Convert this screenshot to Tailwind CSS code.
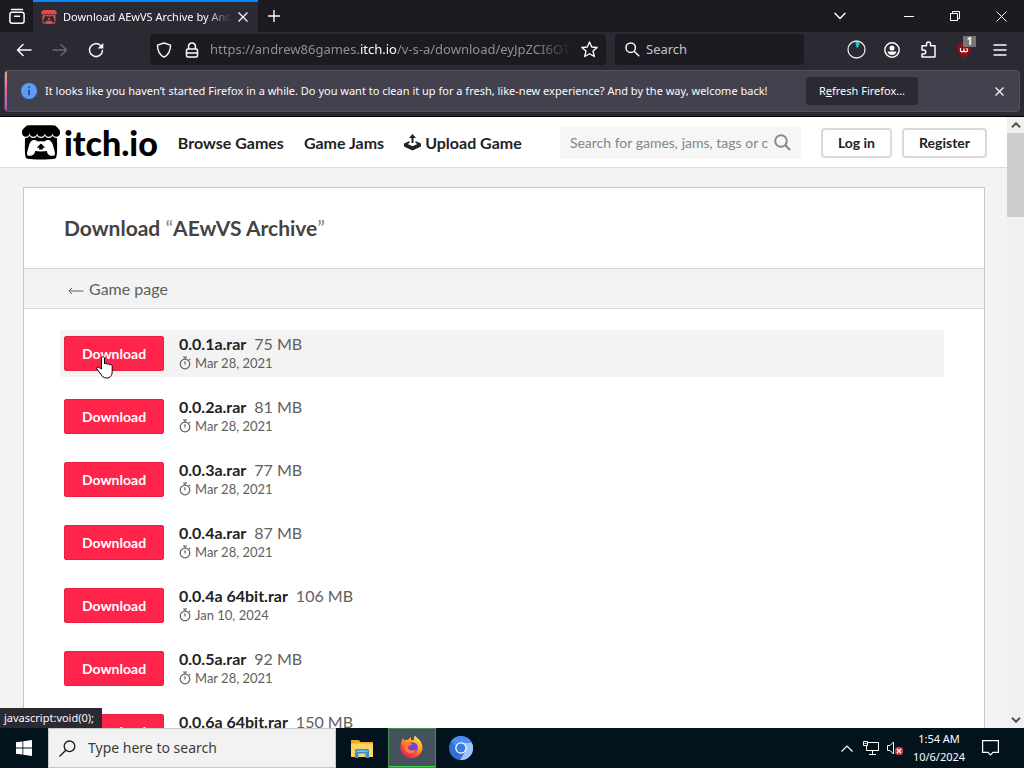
<!DOCTYPE html>
<html lang="en">
<head>
<meta charset="utf-8">
<meta name="viewport" content="width=device-width, initial-scale=1">
<title>Download AEwVS Archive by Andrew86Games</title>
<script src="https://cdn.jsdelivr.net/npm/@tailwindcss/browser@4"></script>
</head>
<body class="h-screen flex flex-col overflow-hidden bg-[#1c1b22] text-[#fbfbfe] font-['Noto_Sans','Open_Sans',sans-serif]">

<svg class="hidden" aria-hidden="true">
  <symbol id="itch" viewBox="0 1.2 24 21.7"><path fill="currentColor" d="M3.13 1.338C2.08 1.96.02 4.328 0 4.95v1.03c0 1.303 1.22 2.45 2.325 2.45 1.33 0 2.436-1.102 2.436-2.41 0 1.308 1.07 2.41 2.4 2.41 1.328 0 2.362-1.102 2.362-2.41 0 1.308 1.137 2.41 2.466 2.41h.024c1.33 0 2.466-1.102 2.466-2.41 0 1.308 1.034 2.41 2.363 2.41 1.33 0 2.4-1.102 2.4-2.41 0 1.308 1.106 2.41 2.435 2.41C22.78 8.43 24 7.282 24 5.98V4.95c-.02-.62-2.082-2.99-3.13-3.612-3.253-.114-5.508-.134-8.87-.133-3.362 0-7.945.053-8.87.133zm6.376 6.477a2.74 2.74 0 0 1-.468.602c-.5.49-1.19.795-1.947.795a2.786 2.786 0 0 1-1.95-.795c-.182-.178-.32-.37-.446-.59-.127.222-.303.412-.486.59a2.788 2.788 0 0 1-1.95.795c-.092 0-.187-.025-.264-.052-.107 1.113-.152 2.176-.168 2.95v.005l-.006 1.167c.02 2.334-.23 7.564 1.03 8.85 1.952.454 5.545.662 9.15.663 3.605 0 7.198-.21 9.15-.664 1.26-1.284 1.01-6.514 1.03-8.848l-.006-1.167v-.004c-.016-.775-.06-1.838-.168-2.95-.077.026-.172.052-.263.052a2.788 2.788 0 0 1-1.95-.795c-.184-.178-.36-.368-.486-.59-.127.22-.265.412-.447.59a2.786 2.786 0 0 1-1.95.794c-.76 0-1.446-.303-1.948-.793a2.74 2.74 0 0 1-.468-.602 2.738 2.738 0 0 1-.463.602 2.787 2.787 0 0 1-1.95.794h-.16a2.787 2.787 0 0 1-1.95-.793 2.738 2.738 0 0 1-.464-.602zm-2.004 2.59v.002c.795.002 1.5 0 2.373.953.687-.072 1.406-.108 2.125-.107.72 0 1.438.035 2.125.107.873-.953 1.578-.95 2.372-.953.376 0 1.876 0 2.92 2.934l1.123 4.028c.832 2.995-.266 3.068-1.636 3.07-2.03-.075-3.156-1.55-3.156-3.025-1.124.184-2.436.276-3.748.277-1.312 0-2.624-.093-3.748-.277 0 1.475-1.125 2.95-3.156 3.026-1.37-.004-2.468-.077-1.636-3.072l1.122-4.027c1.045-2.934 2.545-2.934 2.92-2.934zM12 12.714c-.002.002-2.14 1.964-2.523 2.662l1.4-.056v1.22c0 .056.56.033 1.123.007.562.026 1.124.05 1.124-.008v-1.22l1.4.055C14.138 14.677 12 12.713 12 12.713z"/></symbol>
  <symbol id="watch" viewBox="0 0 12 14"><g fill="none" stroke="currentColor"><circle cx="6" cy="8" r="4.8" stroke-width="1.2"/><path stroke-width="1.2" d="M4 1h4M6 1v2M6 5.2V8.4M10 3l1.2 1.2"/></g></symbol>
</svg>

<!-- Tab strip -->
<header class="flex h-8 shrink-0 items-center bg-[#1c1b22]">
  <button aria-label="View recent browsing" class="flex h-8 w-[33px] shrink-0 items-center justify-center">
    <svg class="size-4" viewBox="0 0 16 16" fill="none" stroke="currentColor" stroke-width="1.5" stroke-linecap="round"><path d="M2.5 1.5h11"/><rect x=".9" y="4.2" width="14.2" height="11" rx="2.2"/><path d="M5.5 8.2h5"/></svg>
  </button>
  <div class="flex h-8 w-[225px] shrink-0 items-center border-t-2 border-[#0a84ff] bg-[#2b2a33] pl-2">
    <svg class="h-[14px] w-4 shrink-0 text-[#e04b4e]"><use href="#itch"/></svg>
    <span class="ml-1.5 w-[168px] overflow-hidden whitespace-nowrap text-[11px] mask-r-from-85%">Download AEwVS Archive by Andre</span>
    <button aria-label="Close tab" class="ml-1 flex size-4 items-center justify-center"><svg class="size-3" viewBox="0 0 12 12" stroke="currentColor" stroke-width="1.2"><path d="M1.5 1.5l9 9M10.500 1.500l-9 9"/></svg></button>
  </div>
  <button aria-label="New tab" class="flex w-8 items-center justify-center"><svg class="size-3" viewBox="0 0 12 12" stroke="currentColor" stroke-width="1.4"><path d="M6 0v12M0 6h12"/></svg></button>
  <div class="ml-auto flex items-center">
    <button aria-label="List all tabs" class="flex h-8 w-11 items-center justify-center"><svg class="h-2 w-3" viewBox="0 0 12 8" fill="none" stroke="currentColor" stroke-width="1.5"><path d="M.6 1L6 6.500 11.400 1"/></svg></button>
    <button aria-label="Minimize" class="ml-6 flex h-8 w-[46px] items-center justify-center"><svg class="h-px w-[10px]" viewBox="0 0 10 1"><path fill="#fff" d="M0 0h10v1H0z"/></svg></button>
    <button aria-label="Restore" class="flex h-8 w-[46px] items-center justify-center"><svg class="size-[10px]" viewBox="0 0 10 10" fill="none" stroke="#fff"><path d="M.5 2.500h7v7h-7zM2.500 2.500v-2h7v7h-2"/></svg></button>
    <button aria-label="Close" class="flex h-8 w-[46px] items-center justify-center"><svg class="size-[11px]" viewBox="0 0 11 11" stroke="#fff"><path d="M.5.5l10 10M10.500.5l-10 10"/></svg></button>
  </div>
</header>

<!-- Navigation bar -->
<nav aria-label="Browser" class="flex h-[35px] shrink-0 items-center bg-[#2b2a33]">
  <button aria-label="Back" class="ml-2 flex size-8 items-center justify-center"><svg class="size-4" viewBox="0 0 16 16" fill="none" stroke="currentColor" stroke-width="1.5" stroke-linecap="round" stroke-linejoin="round"><path d="M15 8H1.500M7 2.500L1.500 8 7 13.500"/></svg></button>
  <button aria-label="Forward" disabled class="ml-1 flex size-8 items-center justify-center text-[#6b6a72]"><svg class="size-4" viewBox="0 0 16 16" fill="none" stroke="currentColor" stroke-width="1.3" stroke-linecap="round" stroke-linejoin="round"><path d="M1 8h13.500M9 2.500L14.500 8 9 13.500"/></svg></button>
  <button aria-label="Reload" class="ml-1 flex size-8 items-center justify-center"><svg class="size-4" viewBox="0 0 16 16" fill="none" stroke="currentColor" stroke-width="1.5" stroke-linecap="round"><path d="M14.500 8.500A6.500 6.500 0 1 1 12.400 3.300"/><path fill="currentColor" stroke="none" d="M15.300 1v5.600H9.700z"/></svg></button>
  <div class="ml-[38px] flex h-[31px] w-[456px] items-center rounded bg-[#1c1b22] pl-1.5">
    <svg class="size-4 shrink-0" viewBox="0 0 16 16" fill="none" stroke="currentColor" stroke-width="1.4" stroke-linejoin="round"><path d="M8 1L14.500 3.200C14.500 8.500 13 12.500 8 15.200 3 12.500 1.500 8.500 1.500 3.200z"/></svg>
    <svg class="ml-3 size-4 shrink-0" viewBox="0 0 16 16" fill="none" stroke="currentColor" stroke-width="1.5"><rect x="2.500" y="7" width="11" height="8" rx="1.500"/><path d="M4.600 7V4.300a3.400 3.400 0 0 1 6.800 0V7M3 11h10"/></svg>
    <div class="ml-2.5 min-w-0 flex-1 overflow-hidden whitespace-nowrap text-[13px] text-[#8f8f97] mask-r-from-90%">https://andrew86games.<span class="text-[#fbfbfe]">itch.io</span>/v-s-a/download/eyJpZCI6OTY</div>
    <button aria-label="Bookmark this page" class="mx-2 flex size-[18px] shrink-0 items-center justify-center"><svg class="size-[17px]" viewBox="0 0 16 16" fill="none" stroke="currentColor" stroke-width="1.3" stroke-linejoin="round"><path d="M8 .9l2.100 4.700 5.100.5-3.900 3.400 1.200 5.100L8 12l-4.500 2.600 1.200-5.100L.8 6.100l5.100-.5z"/></svg></button>
  </div>
  <label class="ml-[9px] flex h-[31px] w-[189px] items-center rounded bg-[#1c1b22] pl-2.5">
    <svg class="size-[15px] shrink-0" viewBox="0 0 15 15" fill="none" stroke="currentColor" stroke-width="1.500"><circle cx="5.700" cy="5.700" r="4.700"/><path d="M9.200 9.200l5 5"/></svg>
    <input aria-label="Web search" placeholder="Search" class="ml-1.5 w-full min-w-0 bg-transparent text-[13px] outline-none placeholder:text-[#c4c4ca]">
  </label>
  <div class="ml-auto flex items-center">
    <button aria-label="Privacy timer" class="flex w-9 justify-center"><svg class="size-[19px]" viewBox="0 0 19 19"><circle cx="9.500" cy="9.500" r="8.500" fill="none" stroke="#e8e8ec" stroke-width="1.300"/><path fill="#25c7c9" d="M8.300 2h4.500l-1 4-2 2.500z"/></svg></button>
    <button aria-label="Account" class="flex w-9 justify-center"><svg class="size-4" viewBox="0 0 16 16"><circle cx="8" cy="8" r="7.200" fill="none" stroke="#fbfbfe" stroke-width="1.500"/><circle cx="8" cy="6" r="2.500" fill="#fbfbfe"/><path fill="#fbfbfe" d="M3.500 9.500h9c-.5 2.400-2.300 3.600-4.500 3.600s-4-1.200-4.500-3.600z"/></svg></button>
    <button aria-label="Extensions" class="flex w-9 justify-center"><svg class="size-[17px]" viewBox="0 0 17 17" fill="none" stroke="#fbfbfe" stroke-width="1.500" stroke-linejoin="round"><path d="M2 7.500V4.800h4.500V3a2 2 0 0 1 4 0v1.800h4.500V16H2v-3h1.700a2 2 0 0 0 0-4H2z"/></svg></button>
    <button aria-label="uBlock Origin, 1 blocked" class="relative flex w-9 justify-center"><svg class="size-4" viewBox="0 0 16 16"><path fill="#960a12" d="M8 0c3 1.800 5 2 7 2 0 7-1.500 11-7 14C2.500 13 1 9 1 2c2 0 4-.2 7-2z"/><path fill="none" stroke="#fff" stroke-width="1.200" d="M4.500 6v2.500q0 1.300 1.700 1.300T8 8.500V6.500v2q0 1.300 1.800 1.300t1.800-1.700q0-1.600-1.500-1.600"/></svg><span class="absolute -top-1.5 left-[17px] flex h-[11px] w-[13px] items-center justify-center bg-[#75757a] text-[10px] font-bold leading-none">1</span></button>
    <button aria-label="Menu" class="mr-[6px] flex w-9 justify-center"><svg class="h-3 w-3.5" viewBox="0 0 14 12" stroke="#fbfbfe" stroke-width="1.400"><path d="M.5 1h13M.5 6h13M.5 11h13"/></svg></button>
  </div>
</nav>

<!-- Notification bar -->
<aside class="shrink-0 border-b border-black bg-[#2b2a33] px-1 pt-[3px] pb-1">
  <div class="flex h-[42px] items-center overflow-hidden rounded border border-[#52525e] bg-[#42414d] text-[11px]">
    <div class="h-full w-0.5 shrink-0 bg-linear-to-b from-[#ff9a7a] via-[#e2679c] to-[#b04fd8]"></div>
    <svg class="ml-3.5 size-4 shrink-0" viewBox="0 0 16 16"><circle cx="8" cy="8" r="8" fill="#5a9df8"/><path stroke="#23406e" stroke-width="1.600" d="M8 3.500v1.800M8 6.800v5.400"/></svg>
    <span class="ml-2 w-[742px] whitespace-nowrap text-[#fbfbfe]">It looks like you haven’t started Firefox in a while. Do you want to clean it up for a fresh, like-new experience? And by the way, welcome back!</span>
    <button class="ml-[19px] h-7 w-28 shrink-0 rounded bg-[#2b2a33]">R<u>e</u>fresh Firefox…</button>
    <button aria-label="Dismiss" class="mr-3 ml-auto flex size-4 items-center justify-center"><svg class="size-[9px]" viewBox="0 0 9 9" stroke="currentColor" stroke-width="1.200"><path d="M.5.5l8 8M8.500.5l-8 8"/></svg></button>
  </div>
</aside>

<!-- Web page -->
<div class="relative flex min-h-0 flex-1 bg-[#f3f3f3] font-['Lato',sans-serif] text-[#222]">
  <div class="min-w-0 flex-1 overflow-hidden">
    <header class="flex h-[51px] items-center border-b border-[#dcdcdc] bg-white pt-px pr-5 pl-[22px] text-base font-bold">
      <a href="#" class="flex items-center text-black"><svg class="h-[35px] w-[38px]"><use href="#itch"/></svg><span class="ml-1 text-[34px] leading-8 font-black">itch.io</span></a>
      <a href="#" class="ml-5 whitespace-nowrap">Browse Games</a>
      <a href="#" class="ml-5 whitespace-nowrap">Game Jams</a>
      <a href="#" class="ml-5 flex items-center gap-1 whitespace-nowrap"><svg class="size-[17px]" viewBox="0 0 17 17"><path fill="#222" d="M8.500 0L12 4H9.500v5h-2V4H5zM0 9.500L5.500 7v2L3.500 10l5 2.300 5-2.300-2-1V7L17 9.500v3L8.500 16.500 0 12.500z"/></svg>Upload Game</a>
      <label class="ml-auto flex h-8 w-[241px] items-center rounded-sm bg-[#f6f6f6] pr-2.5 pl-2.5">
        <input aria-label="Search games" placeholder="Search for games, jams, tags or creators" class="w-full min-w-0 bg-transparent text-sm font-normal outline-none placeholder:text-[#858585]">
        <svg class="ml-1.5 size-[17px] shrink-0" viewBox="0 0 17 17" fill="none" stroke="#8a8a8a" stroke-width="2"><circle cx="7" cy="7" r="5.800"/><path d="M11.300 11.300l4.700 4.700"/></svg>
      </label>
      <button class="ml-5 h-[30px] rounded-sm border-2 border-[#dadada] px-[15px] text-sm whitespace-nowrap">Log in</button>
      <button class="ml-2.5 h-[30px] rounded-sm border-2 border-[#dadada] px-[15px] text-sm whitespace-nowrap">Register</button>
    </header>
    <main class="mt-[19px] mr-[22px] ml-[23px] h-full border border-[#c6c6c6] bg-white">
      <h1 class="flex h-20 items-center pl-10 text-[21px] font-bold text-[#434343]"><span>Download <span class="font-normal text-[#858585]">“</span>AEwVS Archive<span class="font-normal text-[#858585]">”</span></span></h1>
      <div class="flex h-[41px] items-center border-y border-[#d8d8d8] bg-[#f3f3f3] pl-11">
        <a href="#" class="flex items-center text-base text-[#606060]"><svg class="mt-1 mr-[5px] h-2 w-4" viewBox="0 0 16 8" fill="none" stroke="currentColor"><path d="M15.500 4H1M4 1L1 4l3 3"/></svg>Game page</a>
      </div>
      <ul id="files" class="mt-[21px] mr-10 ml-9 flex flex-col gap-4"></ul>
    </main>
  </div>
  <div class="flex w-[17px] shrink-0 flex-col items-center bg-[#f0f0f0]" aria-hidden="true">
    <svg class="my-[5px] h-1.5 w-2.5 shrink-0" viewBox="0 0 10 6" fill="none" stroke="#505050" stroke-width="2"><path d="M1 5.300l4-4 4 4"/></svg>
    <div class="h-[84px] w-full bg-[#cdcdcd]"></div>
    <svg class="mt-auto mb-[5px] h-1.5 w-2.5 shrink-0" viewBox="0 0 10 6" fill="none" stroke="#505050" stroke-width="2"><path d="M1 .7l4 4 4-4"/></svg>
  </div>
  <div class="absolute bottom-0 left-0 flex h-5 items-center bg-[#2b2a33] px-1 pr-2 font-['Noto_Sans',sans-serif] text-[11px] text-[#fbfbfe]">javascript:void(0);</div>
  <svg class="absolute top-[239px] left-24 h-[23px] w-[17px]" viewBox="0 0 17 23" aria-hidden="true"><path fill="#fff" stroke="#000" stroke-linejoin="round" d="M5.500 13V2.200C5.500.2 8.500.2 8.500 2.200V8c.2-1.300 2.600-1.200 2.700.4.500-1.200 2.500-.9 2.600.7.600-1 2.400-.6 2.400 1.200v5.200c0 4-2 6.500-5.500 6.500-3.200 0-4.600-1.500-5.700-3.700L1 13.300c-1-1.800 1-3 2.300-1.700z"/></svg>
</div>

<!-- Taskbar -->
<footer class="flex h-10 shrink-0 items-center bg-[#03131d] text-white">
  <button aria-label="Start" class="flex h-10 w-12 shrink-0 items-center justify-center"><svg class="size-4" viewBox="0 0 16 16" fill="#fff"><path d="M0 2.300l6.500-.9v6.200H0zM7.300 1.300L16 0v7.600H7.300zM0 8.400h6.500v6.200L0 13.700zM7.300 8.400H16V16l-8.700-1.300z"/></svg></button>
  <label class="flex h-10 w-72 items-center border border-[#c8c8c8] bg-[#f2f2f2] pl-2.5">
    <svg class="size-[17px] shrink-0" viewBox="0 0 17 17" fill="none" stroke="#1a1a1a" stroke-width="1.300"><circle cx="10.500" cy="6.300" r="5.300"/><path d="M6.800 10.200L.5 16.500"/></svg>
    <input aria-label="Windows search" placeholder="Type here to search" class="ml-3 w-full min-w-0 bg-transparent text-sm outline-none placeholder:text-[#3c3c3c]">
  </label>
  <button aria-label="File Explorer" class="ml-0.5 flex h-10 w-12 items-center justify-center"><svg class="h-[19px] w-[22px]" viewBox="0 0 22 19"><path fill="#e8a927" d="M0 1h8l1.500 2H22v4H0z"/><path fill="#fcd462" d="M0 4.500h22V18H0z"/><path fill="#3b8fd0" d="M4 11.500q0-1.500 1.500-1.500h11q1.500 0 1.500 1.500V19h-3.500v-4.500h-7V19H4z"/><path fill="#7cc1ee" d="M5.500 11.500h11v1.500h-11z"/></svg></button>
  <button aria-label="Firefox" class="ml-0.5 flex h-10 w-12 items-center justify-center border-b-2 border-[#3bd14a] bg-[#44525b] outline-1 -outline-offset-1 outline-[#4a8a55]">
    <svg class="size-6" viewBox="0 0 24 24"><defs><linearGradient id="ff" x1=".85" y1="0" x2=".25" y2="1"><stop offset="0" stop-color="#fff04a"/><stop offset=".45" stop-color="#ff9526"/><stop offset=".75" stop-color="#ff3b45"/><stop offset="1" stop-color="#d81a78"/></linearGradient></defs><path fill="url(#ff)" d="M15 .5c1.200 2.300 4.500 3.300 6 6.500 2 4 2 8-.5 11.500C16.500 24.500 7.500 25 3 19.500-.5 15 .5 9.500 1.500 7c.2-1.500 1-3 2-4 0 1 .3 2 .8 2.500C5.500 4.800 7 4.700 8.300 5c.5-1.300 1.700-2.300 3-2.500-.5.800-.6 2 0 2.700 1-.2 2-.2 2.800.1C13.500 3.500 14 1.800 15 .5z"/><circle cx="12.500" cy="12.500" r="5.300" fill="#7542d8"/><path fill="#ff7d2d" d="M5 8c3-1 5-.5 7.500 1.500-1.500.2-2.500 1-3.700 1.500-1.300.7-1 3 1.200 4.200 2.500 1 4-.5 6-.3-1.500 3-4.500 4-7.500 3C4 16.500 3.500 11 5 8z"/></svg>
  </button>
  <button aria-label="Chromium" class="ml-px flex h-10 w-12 items-center justify-center"><svg class="size-6" viewBox="0 0 24 24"><circle cx="12" cy="12" r="12" fill="#2f6fd6"/><path fill="#9cc4fa" d="M12 6.500h10.700A12 12 0 0 1 11 24l5.800-9.500z"/><path fill="#4d8df0" d="M12 0a12 12 0 0 1 10.700 6.500H12L7 10 2 5.500A12 12 0 0 1 12 0z"/><circle cx="12" cy="12" r="5.800" fill="#fff"/><circle cx="12" cy="12" r="4.500" fill="#3c7be6"/></svg></button>
  <div class="ml-auto flex items-center pr-[25px]">
    <button aria-label="Show hidden icons" class="mr-2.5"><svg class="h-[7px] w-3" viewBox="0 0 12 7" fill="none" stroke="#fff" stroke-width="1.200"><path d="M.5 6.500L6 1l5.500 5.500"/></svg></button>
    <button aria-label="Network" class="mr-2"><svg class="h-[14px] w-4" viewBox="0 0 16 14" fill="none" stroke="#fff"><path d="M4.500 1.500h11v8H3.500V5M9.500 9.500v3.500M6 13.500h7M.5.5h4v4h-4zM1.500 2.500h2"/></svg></button>
    <button aria-label="Volume muted"><svg class="h-4 w-[17px]" viewBox="0 0 17 16"><path fill="none" stroke="#fff" d="M.5 5.500H3L6.500 2v12L3 10.500H.5z"/><rect x="8" y="7" width="8" height="8" rx="3" fill="#d03a4a"/><path stroke="#fff" stroke-width="1.200" d="M10 9l4 4M14 9l-4 4"/></svg></button>
    <div class="mx-2 w-[54px] text-center text-[11px] leading-[18px] whitespace-nowrap">1:54 AM<br>10/6/2024</div>
    <button aria-label="Notifications" class="ml-2"><svg class="h-4 w-[17px]" viewBox="0 0 17 16" fill="none" stroke="#fff" stroke-width="1.200"><path d="M.6.6h15.800v11.800h-5.400L8.500 15 6 12.400H.6z"/></svg></button>
  </div>
</footer>

<script>
const files = [
  ["0.0.1a.rar", "75 MB", "Mar 28, 2021"],
  ["0.0.2a.rar", "81 MB", "Mar 28, 2021"],
  ["0.0.3a.rar", "77 MB", "Mar 28, 2021"],
  ["0.0.4a.rar", "87 MB", "Mar 28, 2021"],
  ["0.0.4a 64bit.rar", "106 MB", "Jan 10, 2024"],
  ["0.0.5a.rar", "92 MB", "Mar 28, 2021"],
  ["0.0.6a 64bit.rar", "150 MB", "Mar 28, 2021"]
];
document.getElementById("files").innerHTML = files.map(([name, size, date], i) => `
  <li class="flex h-[47px] items-center pl-1 ${i === 0 ? "bg-[#f3f3f3]" : ""}">
    <button class="h-[35px] w-[100px] shrink-0 rounded-xs border border-[#e81f47] bg-[#ff2449] text-sm font-bold text-white">Download</button>
    <div class="mb-0.5 ml-[15px]">
      <div class="text-base leading-5 text-[#606060]"><strong class="mr-2 font-bold text-[#222]">${name}</strong>${size}</div>
      <div class="flex items-center text-[13px] leading-[18px] text-[#606060]"><svg class="mr-1 h-[14px] w-3"><use href="#watch"/></svg>${date}</div>
    </div>
  </li>`).join("");
</script>
</body>
</html>
